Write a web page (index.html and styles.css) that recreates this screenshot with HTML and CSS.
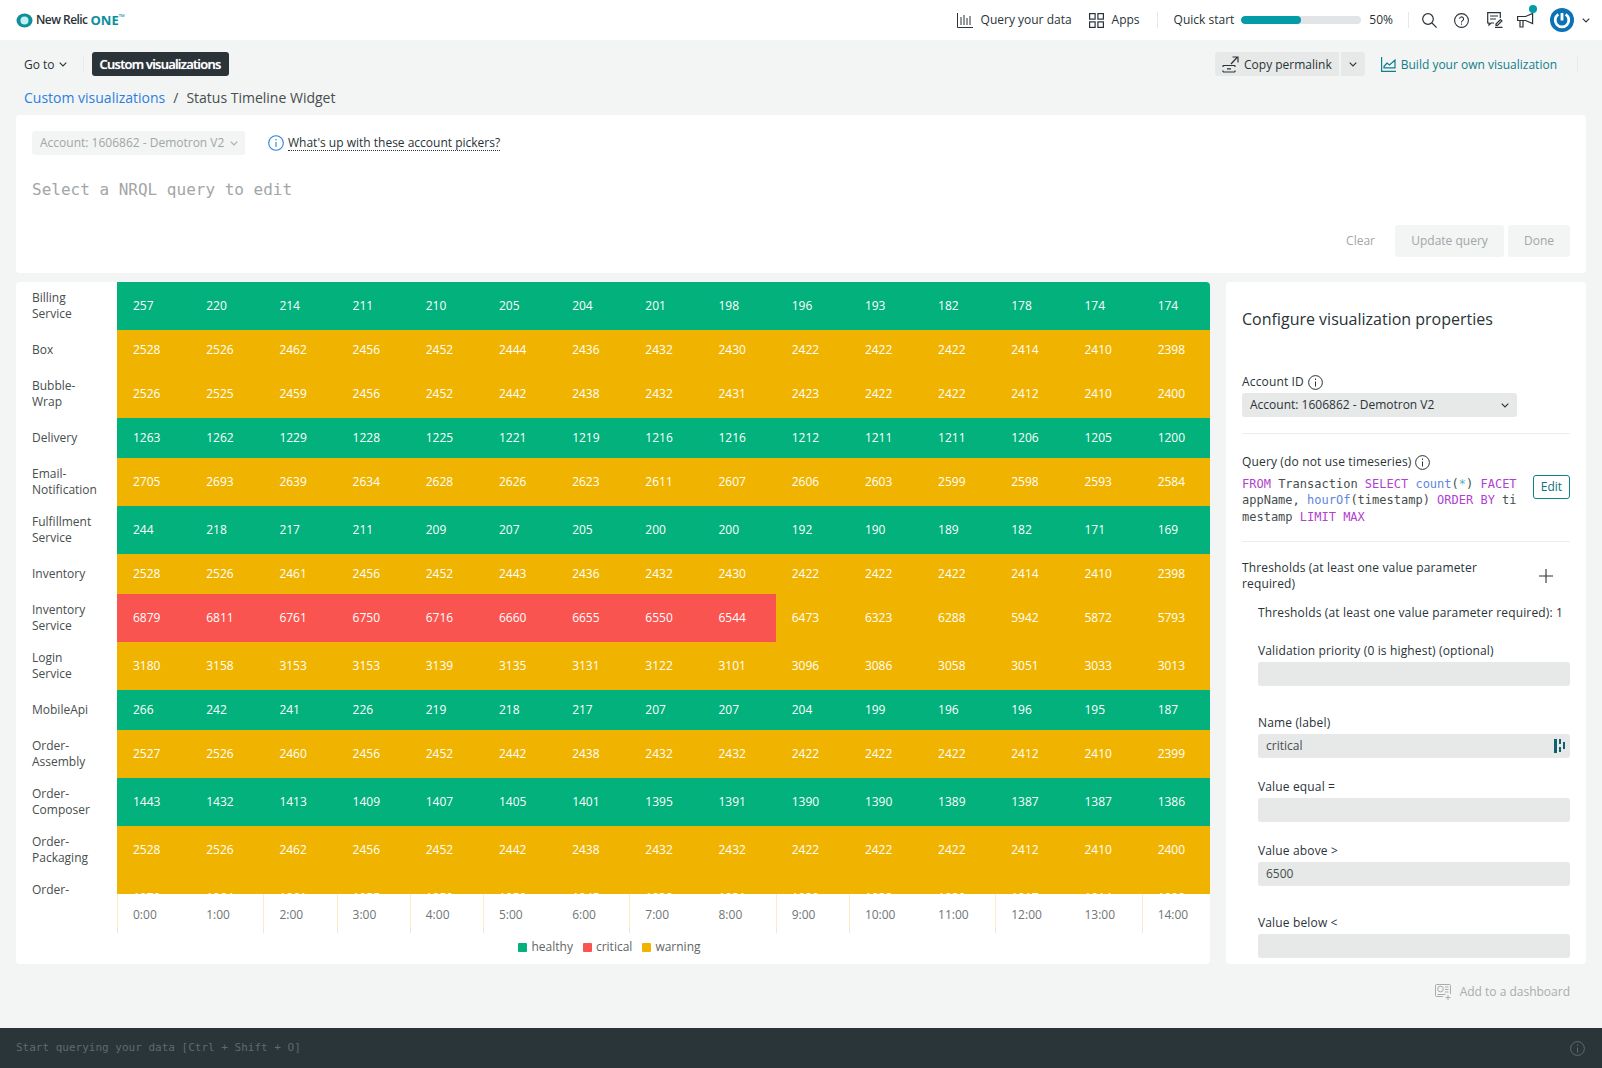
FILE: index.html
```html
<!DOCTYPE html>
<html lang="en">
<head>
<meta charset="utf-8">
<title>Status Timeline Widget</title>
<link rel="stylesheet" href="styles.css">
</head>
<body>
<header class="topbar">
  <div class="brand">
    <svg class="brand-mark" width="17" height="15" viewBox="0 0 17 15"><ellipse cx="8.5" cy="7.5" rx="8" ry="7" fill="#0f8f9a"/><circle cx="8.5" cy="7.5" r="4" fill="#bff0f2"/></svg>
    <span class="brand-name">New Relic</span><span class="brand-one">ONE</span><sup class="brand-tm">™</sup>
  </div>
  <nav class="topnav">
    <svg class="nav-icon" width="16" height="15" viewBox="0 0 16 15" fill="none" stroke="#293338"><path d="M.5 0v14.5H16M4 4v8M7 2v10M10 5v7M13 3v9"/></svg>
    <span class="nav-text nav-query">Query your data</span>
    <svg class="nav-icon" width="15" height="15" viewBox="0 0 15 15" fill="none" stroke="#293338" stroke-width="1.2"><rect x=".6" y=".6" width="5.5" height="5.5"/><rect x="8.9" y=".6" width="5.5" height="5.5"/><rect x=".6" y="8.9" width="5.5" height="5.5"/><rect x="8.9" y="8.9" width="5.5" height="5.5"/></svg>
    <span class="nav-text nav-apps">Apps</span>
    <span class="vsep"></span>
    <span class="nav-text">Quick start</span>
    <span class="progress"><span class="progress-fill"></span></span>
    <span class="nav-text">50%</span>
    <span class="vsep vsep-b"></span>
    <svg class="tool-icon tool-search" width="15" height="15" viewBox="0 0 15 15" fill="none" stroke="#293338" stroke-width="1.2"><circle cx="6" cy="6" r="5.3"/><path d="M10 10l4.6 4.6"/></svg>
    <svg class="tool-icon tool-help" width="15" height="15" viewBox="0 0 15 15" fill="none" stroke="#293338" stroke-width="1.1"><circle cx="7.5" cy="7.5" r="6.9"/><path d="M5.6 5.8a2 2 0 1 1 3 1.8c-.8.5-1.1.9-1.1 1.8M7.5 10.6v1.2"/></svg>
    <svg class="tool-icon tool-feedback" width="16" height="16" viewBox="0 0 16 16" fill="none" stroke="#293338" stroke-width="1.2"><path d="M7 11H4l-2 2v-2H.7V.7h12.6V6M3 4h8M3 7h6M8 15.4h7.5M9 12l4.5-4.5 1.4 1.4L10.400 13.400H9z"/></svg>
    <span class="announce">
      <svg width="20" height="18" viewBox="0 0 20 18" fill="none" stroke="#293338" stroke-width="1.2"><path d="M.6 5.500h8l7-3v10l-7-3h-8zM3 9.500V16h3V9.500"/></svg>
      <span class="announce-dot"></span>
    </span>
    <svg class="avatar" width="24" height="24" viewBox="0 0 24 24" fill="none"><circle cx="12" cy="12" r="12" fill="#0b72b5"/><path d="M8.300 6.400a6.800 6.800 0 1 0 7.400 0" stroke="#fff" stroke-width="2.800"/><path d="M12 5v7.500" stroke="#fff" stroke-width="2.800"/></svg>
    <svg class="chev chev-user" width="8" height="5" viewBox="0 0 8 5" fill="none" stroke="#293338" stroke-width="1.1"><path d="M.7.7L4 4 7.300.7"/></svg>
  </nav>
</header>

<div class="toolbar">
  <span class="goto">Go to <svg class="chev" width="8" height="5" viewBox="0 0 8 5" fill="none" stroke="#293338" stroke-width="1.1"><path d="M.7.7L4 4 7.300.7"/></svg></span>
  <span class="tool-sep"></span>
  <span class="tag">Custom visualizations</span>
  <span class="toolbar-right">
    <span class="split">
      <span class="split-main">
        <svg width="17" height="17" viewBox="0 0 17 17" fill="none" stroke="#293338" stroke-width="1.2"><path d="M1 9.500h12M1 16h12M1 9.500v1.500M1 14.500V16M13 9.500v1.500M13 14.500V16M5 12.800h4M9 8l6-6.500M10.500 1H16v5.500"/></svg>
        Copy permalink
      </span>
      <span class="split-more"><svg width="8" height="5" viewBox="0 0 8 5" fill="none" stroke="#293338" stroke-width="1.1"><path d="M.7.7L4 4 7.300.7"/></svg></span>
    </span>
    <span class="build">
      <svg width="15" height="15" viewBox="0 0 15 15" fill="none" stroke="#0f7f8a" stroke-width="1.2"><path d="M.6 0v14.400H15M3 9.500l3-3.500 2.500 2L14 3v7.800H3z"/></svg>
      Build your own visualization
    </span>
    <span class="tool-sep tool-sep-end"></span>
  </span>
</div>

<div class="crumbs"><span class="crumb-link">Custom visualizations</span><span class="crumb-slash">/</span><span>Status Timeline Widget</span></div>

<section class="query-card">
  <div class="picker-row">
    <span class="picker">Account: 1606862 - Demotron V2 <svg width="8" height="5" viewBox="0 0 8 5" fill="none" stroke="#a9adad" stroke-width="1.1"><path d="M.7.7L4 4 7.300.7"/></svg></span>
    <svg class="info-blue" width="16" height="16" viewBox="0 0 16 16" fill="none" stroke="#2b7fdc" stroke-width="1.1"><circle cx="8" cy="8" r="7.300"/><path d="M8 7v5M8 4v1.500"/></svg>
    <span class="picker-help">What's up with these account pickers?</span>
  </div>
  <div class="nrql-placeholder">Select a NRQL query to edit</div>
  <div class="query-actions">
    <span class="btn-plain">Clear</span>
    <span class="btn-off btn-update">Update query</span>
    <span class="btn-off btn-done">Done</span>
  </div>
</section>

<main class="main">
  <section class="chart-card">
    <div class="rows">
      <div class="row"><div class="row-label">Billing Service</div><div class="cells green"><span class="cell">257</span><span class="cell">220</span><span class="cell">214</span><span class="cell">211</span><span class="cell">210</span><span class="cell">205</span><span class="cell">204</span><span class="cell">201</span><span class="cell">198</span><span class="cell">196</span><span class="cell">193</span><span class="cell">182</span><span class="cell">178</span><span class="cell">174</span><span class="cell">174</span></div></div>
      <div class="row"><div class="row-label">Box</div><div class="cells amber"><span class="cell">2528</span><span class="cell">2526</span><span class="cell">2462</span><span class="cell">2456</span><span class="cell">2452</span><span class="cell">2444</span><span class="cell">2436</span><span class="cell">2432</span><span class="cell">2430</span><span class="cell">2422</span><span class="cell">2422</span><span class="cell">2422</span><span class="cell">2414</span><span class="cell">2410</span><span class="cell">2398</span></div></div>
      <div class="row"><div class="row-label">Bubble-Wrap</div><div class="cells amber"><span class="cell">2526</span><span class="cell">2525</span><span class="cell">2459</span><span class="cell">2456</span><span class="cell">2452</span><span class="cell">2442</span><span class="cell">2438</span><span class="cell">2432</span><span class="cell">2431</span><span class="cell">2423</span><span class="cell">2422</span><span class="cell">2422</span><span class="cell">2412</span><span class="cell">2410</span><span class="cell">2400</span></div></div>
      <div class="row"><div class="row-label">Delivery</div><div class="cells green"><span class="cell">1263</span><span class="cell">1262</span><span class="cell">1229</span><span class="cell">1228</span><span class="cell">1225</span><span class="cell">1221</span><span class="cell">1219</span><span class="cell">1216</span><span class="cell">1216</span><span class="cell">1212</span><span class="cell">1211</span><span class="cell">1211</span><span class="cell">1206</span><span class="cell">1205</span><span class="cell">1200</span></div></div>
      <div class="row"><div class="row-label">Email-Notification</div><div class="cells amber"><span class="cell">2705</span><span class="cell">2693</span><span class="cell">2639</span><span class="cell">2634</span><span class="cell">2628</span><span class="cell">2626</span><span class="cell">2623</span><span class="cell">2611</span><span class="cell">2607</span><span class="cell">2606</span><span class="cell">2603</span><span class="cell">2599</span><span class="cell">2598</span><span class="cell">2593</span><span class="cell">2584</span></div></div>
      <div class="row"><div class="row-label">Fulfillment Service</div><div class="cells green"><span class="cell">244</span><span class="cell">218</span><span class="cell">217</span><span class="cell">211</span><span class="cell">209</span><span class="cell">207</span><span class="cell">205</span><span class="cell">200</span><span class="cell">200</span><span class="cell">192</span><span class="cell">190</span><span class="cell">189</span><span class="cell">182</span><span class="cell">171</span><span class="cell">169</span></div></div>
      <div class="row"><div class="row-label">Inventory</div><div class="cells amber"><span class="cell">2528</span><span class="cell">2526</span><span class="cell">2461</span><span class="cell">2456</span><span class="cell">2452</span><span class="cell">2443</span><span class="cell">2436</span><span class="cell">2432</span><span class="cell">2430</span><span class="cell">2422</span><span class="cell">2422</span><span class="cell">2422</span><span class="cell">2414</span><span class="cell">2410</span><span class="cell">2398</span></div></div>
      <div class="row"><div class="row-label">Inventory Service</div><div class="cells amber"><span class="cell red">6879</span><span class="cell red">6811</span><span class="cell red">6761</span><span class="cell red">6750</span><span class="cell red">6716</span><span class="cell red">6660</span><span class="cell red">6655</span><span class="cell red">6550</span><span class="cell red">6544</span><span class="cell">6473</span><span class="cell">6323</span><span class="cell">6288</span><span class="cell">5942</span><span class="cell">5872</span><span class="cell">5793</span></div></div>
      <div class="row"><div class="row-label">Login Service</div><div class="cells amber"><span class="cell">3180</span><span class="cell">3158</span><span class="cell">3153</span><span class="cell">3153</span><span class="cell">3139</span><span class="cell">3135</span><span class="cell">3131</span><span class="cell">3122</span><span class="cell">3101</span><span class="cell">3096</span><span class="cell">3086</span><span class="cell">3058</span><span class="cell">3051</span><span class="cell">3033</span><span class="cell">3013</span></div></div>
      <div class="row"><div class="row-label">MobileApi</div><div class="cells green"><span class="cell">266</span><span class="cell">242</span><span class="cell">241</span><span class="cell">226</span><span class="cell">219</span><span class="cell">218</span><span class="cell">217</span><span class="cell">207</span><span class="cell">207</span><span class="cell">204</span><span class="cell">199</span><span class="cell">196</span><span class="cell">196</span><span class="cell">195</span><span class="cell">187</span></div></div>
      <div class="row"><div class="row-label">Order-Assembly</div><div class="cells amber"><span class="cell">2527</span><span class="cell">2526</span><span class="cell">2460</span><span class="cell">2456</span><span class="cell">2452</span><span class="cell">2442</span><span class="cell">2438</span><span class="cell">2432</span><span class="cell">2432</span><span class="cell">2422</span><span class="cell">2422</span><span class="cell">2422</span><span class="cell">2412</span><span class="cell">2410</span><span class="cell">2399</span></div></div>
      <div class="row"><div class="row-label">Order-Composer</div><div class="cells green"><span class="cell">1443</span><span class="cell">1432</span><span class="cell">1413</span><span class="cell">1409</span><span class="cell">1407</span><span class="cell">1405</span><span class="cell">1401</span><span class="cell">1395</span><span class="cell">1391</span><span class="cell">1390</span><span class="cell">1390</span><span class="cell">1389</span><span class="cell">1387</span><span class="cell">1387</span><span class="cell">1386</span></div></div>
      <div class="row"><div class="row-label">Order-Packaging</div><div class="cells amber"><span class="cell">2528</span><span class="cell">2526</span><span class="cell">2462</span><span class="cell">2456</span><span class="cell">2452</span><span class="cell">2442</span><span class="cell">2438</span><span class="cell">2432</span><span class="cell">2432</span><span class="cell">2422</span><span class="cell">2422</span><span class="cell">2422</span><span class="cell">2412</span><span class="cell">2410</span><span class="cell">2400</span></div></div>
      <div class="row"><div class="row-label">Order-Tracking</div><div class="cells amber"><span class="cell">1070</span><span class="cell">1064</span><span class="cell">1061</span><span class="cell">1055</span><span class="cell">1050</span><span class="cell">1050</span><span class="cell">1045</span><span class="cell">1038</span><span class="cell">1031</span><span class="cell">1030</span><span class="cell">1028</span><span class="cell">1020</span><span class="cell">1017</span><span class="cell">1014</span><span class="cell">1008</span></div></div>
    </div>
    <div class="axis">
      <span class="tick ticked">0:00</span><span class="tick">1:00</span><span class="tick ticked">2:00</span><span class="tick ticked">3:00</span><span class="tick ticked">4:00</span><span class="tick ticked">5:00</span><span class="tick">6:00</span><span class="tick ticked">7:00</span><span class="tick">8:00</span><span class="tick ticked">9:00</span><span class="tick ticked">10:00</span><span class="tick">11:00</span><span class="tick ticked">12:00</span><span class="tick">13:00</span><span class="tick ticked">14:00</span>
    </div>
    <div class="legend">
      <span class="legend-item"><i class="swatch swatch-green"></i>healthy</span>
      <span class="legend-item"><i class="swatch swatch-red"></i>critical</span>
      <span class="legend-item"><i class="swatch swatch-amber"></i>warning</span>
    </div>
  </section>

  <aside class="props">
    <h2 class="props-title">Configure visualization properties</h2>
    <div class="label label-account">Account ID <svg class="info" width="15" height="15" viewBox="0 0 15 15" fill="none" stroke="#293338"><circle cx="7.500" cy="7.500" r="6.900"/><path d="M7.500 6.500v5M7.500 3.500v1.500"/></svg></div>
    <div class="select">Account: 1606862 - Demotron V2 <svg width="8" height="5" viewBox="0 0 8 5" fill="none" stroke="#293338" stroke-width="1.1"><path d="M.7.7L4 4 7.300.7"/></svg></div>
    <hr class="rule rule-a">
    <div class="label">Query (do not use timeseries) <svg class="info" width="15" height="15" viewBox="0 0 15 15" fill="none" stroke="#293338"><circle cx="7.500" cy="7.500" r="6.900"/><path d="M7.500 6.500v5M7.500 3.500v1.500"/></svg></div>
    <div class="query-block">
      <code class="nrql"><span class="kw">FROM</span> Transaction <span class="kw">SELECT</span> <span class="fn">count</span>(<span class="op">*</span>) <span class="kw">FACET</span> appName, <span class="fn">hourOf</span>(timestamp) <span class="kw">ORDER BY</span> timestamp <span class="kw">LIMIT MAX</span></code>
      <span class="btn-edit">Edit</span>
    </div>
    <hr class="rule rule-b">
    <div class="thresholds-head">
      <span class="thresholds-title">Thresholds (at least one value parameter required)</span>
      <svg class="plus" width="14" height="14" viewBox="0 0 14 14" fill="none" stroke="#293338" stroke-width="1.1"><path d="M7 0v14M0 7h14"/></svg>
    </div>
    <div class="threshold">
      <div class="label label-count">Thresholds (at least one value parameter required): 1</div>
      <div class="field field-first"><div class="label">Validation priority (0 is highest) (optional)</div><div class="input"></div></div>
      <div class="field field-wide"><div class="label">Name (label)</div><div class="input">critical <svg class="input-icon" width="11" height="14" viewBox="0 0 11 14" fill="#12606e"><path d="M0 0h3v14H0zM5 0h2v5H5zM5 8h2v5H5zM9 3h2v7H9z"/></svg></div></div>
      <div class="field"><div class="label">Value equal =</div><div class="input"></div></div>
      <div class="field"><div class="label">Value above &gt;</div><div class="input">6500</div></div>
      <div class="field field-wide"><div class="label">Value below &lt;</div><div class="input"></div></div>
    </div>
  </aside>
</main>

<div class="add-row">
  <svg width="17" height="16" viewBox="0 0 17 16" fill="none" stroke="#a9adad"><path d="M8 12.500H1.500a1 1 0 0 1-1-1v-10a1 1 0 0 1 1-1h13a1 1 0 0 1 1 1V10M13 11v5M10.500 13.500h5"/><circle cx="5.500" cy="5" r="2.800"/><path d="M10 3h3.500M10 5.500h3.500M10 8h3.500M2.500 10.500h8"/></svg>
  <span>Add to a dashboard</span>
</div>

<footer class="console">
  <span class="console-text">Start querying your data [Ctrl + Shift + O]</span>
  <svg width="15" height="15" viewBox="0 0 15 15" fill="none" stroke="#5f6b6e"><circle cx="7.500" cy="7.500" r="6.900"/><path d="M7.500 6.500v5M7.500 3.500v1.500"/></svg>
</footer>
</body>
</html>
```

FILE: styles.css
```css
* { box-sizing: border-box; }
html, body { margin: 0; height: 100%; }
body {
  width: 1602px;
  height: 1068px;
  overflow: hidden;
  display: flex;
  flex-direction: column;
  background: #f3f4f4;
  color: #293338;
  font: 12px/16px "Open Sans", "Noto Sans", sans-serif;
}
svg { display: block; flex: none; }

.topbar { height: 40px; flex: none; background: #fff; display: flex; align-items: center; justify-content: space-between; padding: 0 12px 0 16px; }
.brand { display: flex; align-items: center; font-weight: 600; font-size: 12px; letter-spacing: -.55px; }
.brand-mark { margin-right: 3px; }
.brand-name { color: #293338; }
.brand-one { color: #0a8f9b; font-weight: 700; font-size: 13px; margin-left: 3px; letter-spacing: 0; }
.brand-tm { color: #0a8f9b; font-size: 8px; line-height: 8px; margin-bottom: 6px; letter-spacing: 0; }
.topnav { display: flex; align-items: center; }
.nav-text { font-size: 12px; line-height: 16px; }
.nav-icon { margin-right: 8px; }
.nav-query { margin-right: 17px; }
.vsep { width: 1px; height: 16px; background: #e7e9e9; margin: 0 16px 0 17px; }
.progress { width: 120px; height: 8px; border-radius: 4px; background: #e3e4e5; margin: 0 8px 0 7px; overflow: hidden; }
.progress-fill { display: block; width: 50%; height: 100%; border-radius: 4px; background: #019ca6; }
.vsep-b { margin: 0 13px 0 15px; }
.tool-search { margin-right: 17px; }
.tool-help { margin-right: 18px; }
.tool-feedback { margin-right: 14px; }
.announce { position: relative; margin-right: 13px; }
.announce-dot { position: absolute; right: 0; top: -6px; width: 8px; height: 8px; border-radius: 50%; background: #019ca6; }
.avatar { margin-right: 8px; }

.toolbar { flex: none; height: 24px; margin-top: 12px; padding: 0 16px 0 24px; display: flex; align-items: center; }
.goto { display: inline-flex; align-items: center; gap: 4px; padding-top: 1px; }
.tool-sep { width: 1px; height: 16px; background: #e9ebeb; margin: 0 8px 0 16px; }
.tag { height: 24px; padding: 0 8px; border-radius: 3px; background: #293338; color: #fff; font-weight: 600; font-size: 13px; line-height: 24px; letter-spacing: -.75px; text-shadow: 0 0 1px rgba(255,255,255,.7); }
.toolbar-right { margin-left: auto; display: flex; align-items: center; }
.split { display: flex; height: 24px; gap: 2px; margin-right: 16px; }
.split-main { background: #e7e8e8; border-radius: 3px 0 0 3px; display: flex; align-items: center; gap: 5px; padding: 1px 7px 0; }
.split-more { background: #e7e8e8; border-radius: 0 3px 3px 0; width: 24px; display: flex; align-items: center; justify-content: center; }
.build { display: flex; align-items: center; gap: 5px; color: #0f7f8a; padding-top: 1px; }
.tool-sep-end { margin: 0 8px 0 20px; }

.crumbs { flex: none; margin-top: 12px; padding-left: 24px; font-size: 14px; line-height: 20px; color: #464e4e; height: 20px; }
.crumb-link { color: #2b7fdc; }
.crumb-slash { margin: 0 8px; }

.query-card { flex: none; margin: 7px 16px 0; height: 158px; background: #fff; border-radius: 4px; padding: 16px; display: flex; flex-direction: column; }
.picker-row { display: flex; align-items: center; }
.picker { height: 24px; width: 213px; padding: 0 7px 0 8px; background: #f3f4f4; border-radius: 3px; color: #a2a6a6; display: flex; align-items: center; justify-content: space-between; white-space: nowrap; }
.info-blue { margin: 0 4px 0 23px; }
.picker-help { border-bottom: 1px dotted #293338; line-height: 14px; }
.nrql-placeholder { margin-top: 25px; font: 16px/20px "DejaVu Sans Mono", "Liberation Mono", monospace; color: #a2a6a6; }
.query-actions { margin-top: auto; display: flex; justify-content: flex-end; align-items: center; color: #a2a6a6; }
.btn-plain { margin-right: 20px; }
.btn-off { height: 32px; display: flex; align-items: center; justify-content: center; background: #f3f4f4; border-radius: 3px; }
.btn-update { width: 109px; margin-right: 4px; }
.btn-done { width: 62px; }

.main { flex: none; height: 682px; margin: 9px 16px 0; display: flex; gap: 16px; }
.chart-card { width: 1194px; background: #fff; border-radius: 4px; overflow: hidden; }
.rows { height: 612px; overflow: hidden; }
.row { display: flex; }
.row-label { flex: none; width: 101px; padding: 8px 24px 8px 16px; min-height: 40px; display: flex; align-items: center; color: #464e4e; }
.cells { flex: none; display: flex; align-items: stretch; }
.green { background: #02b17b; }
.amber { background: #f0b400; }
.cell { width: 73.2px; padding-left: 16px; display: flex; align-items: center; color: #fff; }
.red { background: #f9544f; }

.axis { display: flex; height: 39px; margin-left: 101px; }
.tick { width: 73.2px; flex: none; padding: 3px 0 0 15px; display: flex; align-items: center; color: #6f7676; border-left: 1px solid transparent; }
.ticked { border-image: linear-gradient(#fcecc8 0, #fcecc8 85%, #fcdede 85%) 1; }
.legend { height: 16px; margin-top: 6px; padding-right: 7px; display: flex; justify-content: center; gap: 10px; color: #5f6666; }
.legend-item { display: flex; align-items: center; gap: 4px; }
.swatch { width: 9px; height: 9px; border-radius: 1px; }
.swatch-green { background: #02b17b; }
.swatch-red { background: #f9544f; }
.swatch-amber { background: #f0b400; }

.props { width: 360px; background: #fff; border-radius: 4px; overflow: hidden; padding: 0 16px; }
.props-title { margin: 27px 0 0; font-size: 16px; line-height: 20px; font-weight: 400; color: #293338; }
.label { display: flex; align-items: center; gap: 4px; margin-bottom: 3px; height: 16px; white-space: nowrap; font-weight: 500; letter-spacing: .15px; }
.label-account { margin-top: 45px; }
.select { height: 24px; width: 275px; background: #e7e8e8; border-radius: 3px; padding: 0 8px; display: flex; align-items: center; justify-content: space-between; }
.rule { border: 0; height: 1px; background: #eceded; margin: 0; }
.rule-a { margin: 16px 0 20px; }
.query-block { display: flex; justify-content: space-between; align-items: flex-start; margin-top: 6px; }
.nrql { width: 276px; word-break: break-all; font: 12px/16.4px "DejaVu Sans Mono", "Liberation Mono", monospace; color: #464e4e; }
.kw { color: #b13fd0; }
.fn { color: #5e86e0; }
.op { color: #58b4c4; }
.btn-edit { height: 24px; width: 37px; margin-top: -1px; border: 1px solid #0f7f8a; border-radius: 3px; color: #0f6f7a; display: flex; align-items: center; justify-content: center; }
.rule-b { margin: 16px 0 18px; }
.thresholds-head { display: flex; justify-content: space-between; align-items: center; padding-right: 17px; font-weight: 500; letter-spacing: .15px; }
.thresholds-title { width: 280px; }
.threshold { padding-left: 16px; }
.label-count { margin-top: 13px; }
.field { margin-top: 21px; }
.field-first { margin-top: 22px; }
.field-wide { margin-top: 29px; }
.input { height: 24px; background: #e7e8e8; border-radius: 3px; padding: 0 5px 0 8px; display: flex; align-items: center; justify-content: space-between; color: #464e4e; }

.add-row { flex: none; height: 16px; margin-top: 20px; padding-right: 32px; display: flex; justify-content: flex-end; align-items: center; gap: 8px; color: #a9adad; }
.console { flex: none; margin-top: auto; height: 40px; background: #293538; padding: 0 17px 0 16px; display: flex; justify-content: space-between; align-items: center; }
.console-text { font: 11px/16px "DejaVu Sans Mono", "Liberation Mono", monospace; color: #5f6b6e; }
```
